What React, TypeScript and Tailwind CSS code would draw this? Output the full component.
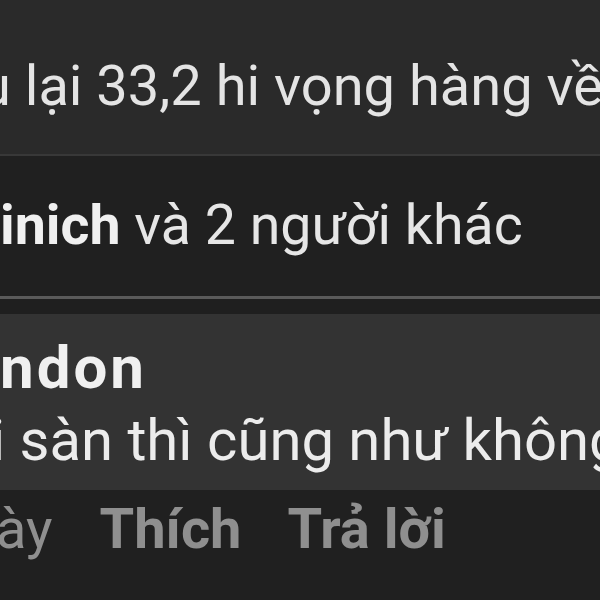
import React from "react"

const font = "font-['Roboto','Liberation_Sans',sans-serif]"

const App = () => {
  return (
    <div className={`w-[600px] h-[600px] overflow-hidden bg-[#202020] ${font}`}>
      {/* Previous comment text */}
      <div className="h-[154px] bg-[#2a2a2a] pt-[54px] overflow-hidden whitespace-nowrap">
        <p className="ml-[-20px] text-[56px] leading-[64px] text-[#e4e4e4]">
          u lại 33,2 hi vọng hàng về
        </p>
      </div>

      {/* Reactions line */}
      <div className="h-[142px] border-t-2 border-[#383838] bg-[#202020] pt-[38px] overflow-hidden whitespace-nowrap">
        <p className="text-[55.5px] leading-[64px] text-[#e6e6e6]">
          <span className="font-bold text-[#f0f0f0]">inich</span> và 2 người khác
        </p>
      </div>

      <div className="h-[3px] bg-[#5a5a5a]" />
      <div className="h-[15px] bg-[#1f1f1f]" />

      {/* Reply bubble */}
      <div className="h-[176px] bg-[#333333] pt-[17px] overflow-hidden whitespace-nowrap">
        <p className="text-[60px] leading-[73px] font-bold tracking-[3px] text-[#f0f0f0]">ndon</p>
        <p className="ml-[-9px] text-[58px] leading-[73px] text-[#ececec]">
          i sàn thì cũng như không
        </p>
      </div>

      {/* Actions */}
      <div className="h-[110px] bg-[#202020] pt-[7px] overflow-hidden whitespace-nowrap">
        <div className="ml-[-4px] flex items-baseline text-[56px] leading-[64px] text-[#8f8f8f]">
          <span>ày</span>
          <span className="ml-[47px] font-bold">Thích</span>
          <span className="ml-[46px] font-bold">Trả lời</span>
        </div>
      </div>
    </div>
  )
}

export default App
